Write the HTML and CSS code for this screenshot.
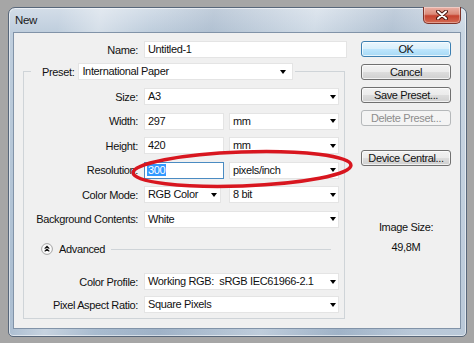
FILE: index.html
```html
<!DOCTYPE html>
<html lang="en">
<head>
  <meta charset="UTF-8" />
  <title>New</title>
  <link rel="stylesheet" href="styles.css">
</head>
<body>
  <div class="window">
    <div class="titlebar">
      <span class="title">New</span>
      <button class="close" aria-label="Close">
        <svg width="12" height="10" viewBox="0 0 12 10">
          <path d="M2 1.5 L10 8.5 M10 1.5 L2 8.5" stroke="#4a1710" stroke-width="4" stroke-linecap="round" />
          <path d="M2 1.5 L10 8.5 M10 1.5 L2 8.5" stroke="#ffffff" stroke-width="2" stroke-linecap="round" />
        </svg>
      </button>
    </div>

    <div class="client">
      <div class="form">
        <div class="name-row">
          <label>Name:</label>
          <div class="field">Untitled-1</div>
        </div>

        <fieldset class="group">
          <legend>
            <span>Preset:</span>
            <div class="select preset">International Paper</div>
          </legend>

          <div class="rows">
            <label>Size:</label>
            <div class="select">A3</div>

            <label>Width:</label>
            <div class="pair">
              <div class="field short">297</div>
              <div class="select unit">mm</div>
            </div>

            <label>Height:</label>
            <div class="pair">
              <div class="field short">420</div>
              <div class="select unit">mm</div>
            </div>

            <label>Resolution:</label>
            <div class="pair">
              <div class="field short focus"><span class="sel">300</span></div>
              <div class="select unit">pixels/inch</div>
            </div>

            <label>Color Mode:</label>
            <div class="pair mode">
              <div class="select small">RGB Color</div>
              <div class="select unit">8 bit</div>
            </div>

            <label>Background Contents:</label>
            <div class="select">White</div>
          </div>

          <div class="advanced">
            <svg class="toggle" width="12" height="12" viewBox="0 0 12 12">
              <circle cx="6" cy="6" r="5.4" fill="#fbfbfb" stroke="#a3a3a3" stroke-width="1" />
              <path d="M3.7 5.6 L6 3.4 L8.3 5.6 M3.7 8.4 L6 6.2 L8.3 8.4" fill="none" stroke="#111" stroke-width="1.2" />
            </svg>
            <span>Advanced</span>
            <span class="rule"></span>
          </div>

          <div class="rows tight">
            <label>Color Profile:</label>
            <div class="select">Working RGB:&nbsp; sRGB IEC61966-2.1</div>

            <label>Pixel Aspect Ratio:</label>
            <div class="select">Square Pixels</div>
          </div>
        </fieldset>
      </div>

      <div class="side">
        <button class="btn default">OK</button>
        <button class="btn">Cancel</button>
        <button class="btn">Save Preset...</button>
        <button class="btn" disabled>Delete Preset...</button>
        <button class="btn device">Device Central...</button>
        <div class="image-size">
          <span>Image Size:</span>
          <span>49,8M</span>
        </div>
      </div>
    </div>
  </div>

  <!-- red marker drawn over the screenshot -->
  <svg class="mark" width="474" height="343" viewBox="0 0 474 343">
    <ellipse cx="242" cy="169" rx="109" ry="17" transform="rotate(-2 242 169)" fill="none" stroke="#d8161f" stroke-width="3.5" />
  </svg>
</body>
</html>
```

FILE: styles.css
```css
:root {
  --frame-edge: #58677a;
  --client-bg: #f0f0f0;
  --group-line: #cfd4d8;
  --field-border: #e4e4e4;
  --text: #111;
}

* {
  box-sizing: border-box;
}

body {
  margin: 0;
  padding: 7px 0 0 8px;
  height: 343px;
  overflow: hidden;
  background: #a6a6a6;
  font-family: "Liberation Sans", Arial, sans-serif;
  font-size: 11px;
  letter-spacing: -0.35px;
  color: var(--text);
}

.window {
  width: 459px;
  height: 330px;
  border: 1px solid var(--frame-edge);
  border-radius: 7px 7px 5px 5px;
  padding: 0 5px 7px 4px;
  display: flex;
  flex-direction: column;
  background:
    linear-gradient(100deg, rgba(255,255,255,0) 10%, rgba(255,255,255,0.35) 18%, rgba(255,255,255,0) 28%, rgba(120,140,165,0.2) 40%, rgba(255,255,255,0.25) 60%, rgba(120,140,165,0.18) 75%, rgba(255,255,255,0.2) 90%),
    linear-gradient(180deg, #d3dde8 0, #bfcedd 24px, #a8bbcf 100%);
  box-shadow: inset 0 0 0 1px rgba(255,255,255,0.55);
}

.titlebar {
  height: 24px;
  display: flex;
  align-items: flex-start;
}

.title {
  padding: 5px 0 0 2px;
  font-size: 11.5px;
  line-height: 15px;
  color: #1a1a1a;
}

.close {
  margin: -1px 0 0 auto;
  width: 38px;
  height: 17px;
  padding: 0;
  display: flex;
  align-items: center;
  justify-content: center;
  border: 1px solid #7e3329;
  border-top: none;
  border-radius: 0 0 5px 5px;
  background: linear-gradient(180deg, #eab1a6 0%, #db8a78 45%, #c6432f 55%, #d46a52 100%);
  box-shadow: inset 0 0 0 1px rgba(255,255,255,0.35);
}

.client {
  flex: 1;
  display: flex;
  gap: 14px;
  padding: 8px 0 0 9px;
  background: var(--client-bg);
  border: 1px solid #8193a8;
}

/* left column */
.form {
  width: 324px;
}

.name-row {
  display: grid;
  grid-template-columns: 115px 203px;
  column-gap: 6px;
  align-items: center;
}

label {
  text-align: right;
  white-space: nowrap;
}

.field,
.select {
  height: 17px;
  line-height: 15px;
  padding: 0 2px 0 3px;
  background: #fff;
  border: 1px solid var(--field-border);
  white-space: nowrap;
}

.select {
  display: flex;
  align-items: center;
  justify-content: space-between;
}

.select::after {
  content: "";
  flex: none;
  border-left: 3.5px solid transparent;
  border-right: 3.5px solid transparent;
  border-top: 4px solid #000;
}

.field.focus {
  border-color: #4a8bc2;
  padding-left: 2px;
}

.sel {
  background: #3399ff;
  color: #fff;
  padding: 0 1px;
}

.group {
  margin: 5px 0 0;
  padding: 0 0 5px;
  width: 322px;
  min-width: 0;
  border: 1px solid var(--group-line);
}

.group legend {
  display: flex;
  align-items: center;
  gap: 4px;
  margin-left: 7px;
  padding: 0 2px 0 11px;
}

.select.preset {
  width: 215px;
  padding-right: 6px;
}

.rows {
  display: grid;
  grid-template-columns: 114px 195px;
  column-gap: 6px;
  row-gap: 7.5px;
  align-items: center;
  margin-top: 8px;
}

.rows.tight {
  row-gap: 6px;
  margin-top: 17.5px;
}

.pair {
  display: flex;
  gap: 5px;
}

.pair.mode {
  gap: 8px;
}

.field.short {
  width: 80px;
}

.select.unit {
  width: 110px;
}

.select.small {
  width: 77px;
  padding-right: 3px;
}

.advanced {
  display: flex;
  align-items: center;
  gap: 6px;
  height: 13px;
  margin: 15px 13px 0 17px;
}

.advanced .rule {
  flex: 1;
  border-top: 1px solid var(--group-line);
}

/* right column */
.side {
  width: 90px;
  display: flex;
  flex-direction: column;
  gap: 7px;
}

.btn {
  height: 16px;
  padding: 0;
  font-family: inherit;
  font-size: 11px;
  letter-spacing: -0.35px;
  line-height: 14px;
  color: var(--text);
  border: 1px solid #707070;
  border-radius: 3px;
  background: linear-gradient(180deg, #f2f2f2 0%, #ebebeb 50%, #dddddd 51%, #cfcfcf 100%);
  box-shadow: inset 0 0 0 1px rgba(255,255,255,0.7);
}

.btn.default {
  border-color: #3c7fb1;
  background: linear-gradient(180deg, #eaf6fd 0%, #d9f0fc 50%, #bee6fd 51%, #a7d9f5 100%);
}

.btn:disabled {
  color: #8d8d8d;
  border-color: #b5b8ba;
  background: #f4f4f4;
  box-shadow: none;
}

.btn.device {
  margin-top: 17px;
}

.image-size {
  margin-top: 48px;
  display: flex;
  flex-direction: column;
  align-items: center;
  gap: 7px;
  line-height: 13px;
}

.mark {
  position: absolute;
  top: 0;
  left: 0;
  pointer-events: none;
}
```
